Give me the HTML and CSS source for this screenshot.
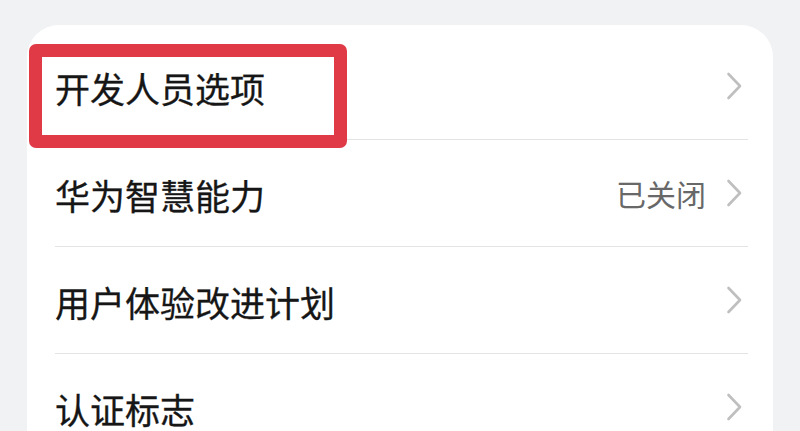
FILE: index.html
```html
<!doctype html>
<html lang="zh-CN">
<head>
    <meta charset="UTF-8">
    <title>设置</title>
<link rel="stylesheet" href="styles.css">
</head>
<body>
<div class="card">
    <div class="row">
        <span class="label">开发人员选项</span>
        <span class="right"><svg class="chev" width="16" height="28" viewBox="0 0 16 28"><path d="M2.5 2 L14 14 L2.5 26" /></svg></span>
    </div>
    <div class="row">
        <span class="label">华为智慧能力</span>
        <span class="right"><span class="value">已关闭</span><svg class="chev" width="16" height="28" viewBox="0 0 16 28"><path d="M2.5 2 L14 14 L2.5 26" /></svg></span>
    </div>
    <div class="row">
        <span class="label">用户体验改进计划</span>
        <span class="right"><svg class="chev" width="16" height="28" viewBox="0 0 16 28"><path d="M2.5 2 L14 14 L2.5 26" /></svg></span>
    </div>
    <div class="row">
        <span class="label">认证标志</span>
        <span class="right"><svg class="chev" width="16" height="28" viewBox="0 0 16 28"><path d="M2.5 2 L14 14 L2.5 26" /></svg></span>
    </div>
    <div class="mark"></div>
</div>
</body>
</html>
```

FILE: styles.css
```css
body {
    margin: 0;
    background-color: #f1f2f4;
    font-family: "Noto Sans CJK SC", "Noto Sans", sans-serif;
    overflow: hidden;
}
.card {
    position: relative;
    margin: 25px 0 0 27px;
    width: 746px;
    height: 406px;
    padding-top: 8px;
    box-sizing: border-box;
    background: #fff;
    border-radius: 32px 32px 0 0;
    overflow: hidden;
}
.row {
    display: flex;
    align-items: center;
    justify-content: space-between;
    height: 107px;
    margin: 0 25px 0 28px;
    padding-right: 6px;
    border-bottom: 1px solid #e3e3e3;
    box-sizing: border-box;
}
.label {
    font-size: 35px;
    color: #161616;
    position: relative;
    top: 1px;
    -webkit-text-stroke: 0.3px #161616;
}
.right {
    display: flex;
    align-items: center;
    gap: 20px;
}
.value {
    font-size: 30px;
    color: #686868;
}
.chev path {
    fill: none;
    stroke: #bfbfbf;
    stroke-width: 2.6;
    stroke-linecap: round;
    stroke-linejoin: round;
}
.mark {
    position: absolute;
    left: 2px;
    top: 19px;
    width: 318px;
    height: 104px;
    box-sizing: border-box;
    border: 13px solid #e03a47;
    border-radius: 7px;
}
```
